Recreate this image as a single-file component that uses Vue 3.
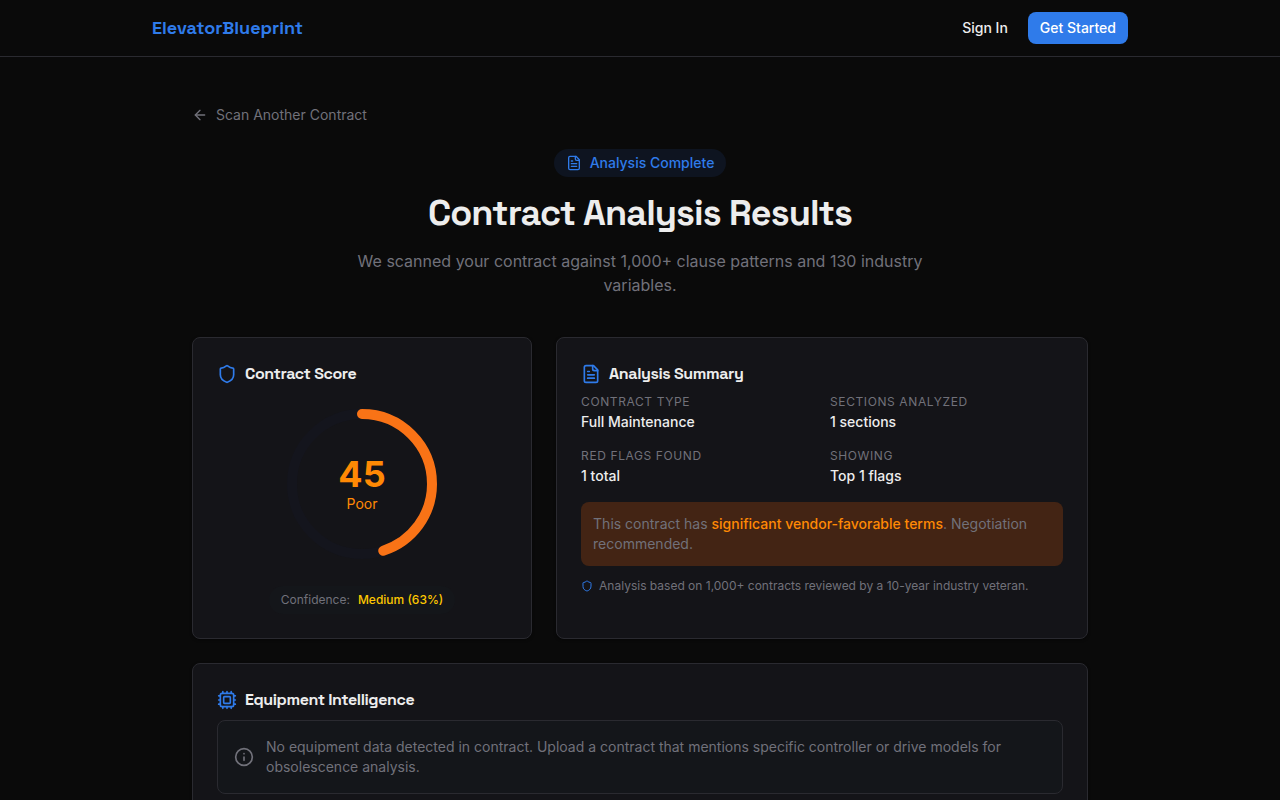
<script setup>
    import {ref, computed} from 'vue'

    const score = ref(45)
    const rating = ref('Poor')
    const confidence = ref('Medium (63%)')

    const summary = [
        {label: 'Contract Type', value: 'Full Maintenance'},
        {label: 'Sections Analyzed', value: '1 sections'},
        {label: 'Red Flags Found', value: '1 total'},
        {label: 'Showing', value: 'Top 1 flags'}
    ]

    // --- score ring ---
    const radius = 70
    const circumference = 2 * Math.PI * radius
    const ringOffset = computed(() => circumference * (1 - score.value / 100))
</script>

<template>
    <header class="topbar">
        <div class="topbar-inner">
            <a href="#" class="logo">ElevatorBlueprint</a>
            <nav class="actions">
                <a href="#" class="sign-in">Sign In</a>
                <button type="button" class="get-started">Get Started</button>
            </nav>
        </div>
    </header>

    <main class="page">
        <a href="#" class="back">
            <svg class="icon" width="16" height="16" viewBox="0 0 24 24">
                <path d="m12 19-7-7 7-7" />
                <path d="M19 12H5" />
            </svg>
            Scan Another Contract
        </a>

        <section class="intro">
            <div class="badge">
                <svg class="icon" width="16" height="16" viewBox="0 0 24 24">
                    <path d="M15 2H6a2 2 0 0 0-2 2v16a2 2 0 0 0 2 2h12a2 2 0 0 0 2-2V7Z" />
                    <path d="M14 2v4a2 2 0 0 0 2 2h4" />
                    <path d="M10 9H8M16 13H8M16 17H8" />
                </svg>
                Analysis Complete
            </div>
            <h1>Contract Analysis Results</h1>
            <p>We scanned your contract against 1,000+ clause patterns and 130 industry variables.</p>
        </section>

        <div class="columns">
            <section class="card score-card">
                <h2>
                    <svg class="icon" width="20" height="20" viewBox="0 0 24 24">
                        <path d="M20 13c0 5-3.5 7.5-7.66 8.95a1 1 0 0 1-.67-.01C7.5 20.5 4 18 4 13V6a1 1 0 0 1 1-1c2 0 4.500-1.200 6.240-2.720a1.170 1.170 0 0 1 1.520 0C14.510 3.810 17 5 19 5a1 1 0 0 1 1 1z" />
                    </svg>
                    Contract Score
                </h2>
                <div class="ring">
                    <svg width="160" height="160" viewBox="0 0 160 160">
                        <circle class="track" cx="80" cy="80" :r="radius" />
                        <circle class="value" cx="80" cy="80" :r="radius" transform="rotate(-90 80 80)"
                            :stroke-dasharray="circumference" :stroke-dashoffset="ringOffset" />
                    </svg>
                    <div class="ring-text">
                        <strong>{{ score }}</strong>
                        <span>{{ rating }}</span>
                    </div>
                </div>
                <div class="confidence">
                    <span>Confidence:</span>
                    <b>{{ confidence }}</b>
                </div>
            </section>

            <section class="card">
                <h2>
                    <svg class="icon" width="20" height="20" viewBox="0 0 24 24">
                        <path d="M15 2H6a2 2 0 0 0-2 2v16a2 2 0 0 0 2 2h12a2 2 0 0 0 2-2V7Z" />
                        <path d="M14 2v4a2 2 0 0 0 2 2h4" />
                        <path d="M10 9H8M16 13H8M16 17H8" />
                    </svg>
                    Analysis Summary
                </h2>
                <dl class="facts">
                    <div v-for="item in summary" :key="item.label">
                        <dt>{{ item.label }}</dt>
                        <dd>{{ item.value }}</dd>
                    </div>
                </dl>
                <p class="warning">This contract has <b>significant vendor-favorable terms</b>. Negotiation recommended.</p>
                <p class="footnote">
                    <svg class="icon" width="12" height="12" viewBox="0 0 24 24">
                        <path d="M20 13c0 5-3.5 7.5-7.66 8.95a1 1 0 0 1-.67-.01C7.5 20.5 4 18 4 13V6a1 1 0 0 1 1-1c2 0 4.500-1.200 6.240-2.720a1.170 1.170 0 0 1 1.520 0C14.510 3.810 17 5 19 5a1 1 0 0 1 1 1z" />
                    </svg>
                    Analysis based on 1,000+ contracts reviewed by a 10-year industry veteran.
                </p>
            </section>
        </div>

        <section class="card">
            <h2>
                <svg class="icon" width="20" height="20" viewBox="0 0 24 24">
                    <rect x="4" y="4" width="16" height="16" rx="2" />
                    <rect x="8" y="8" width="8" height="8" rx="1" />
                    <path d="M12 20v2M12 2v2M17 20v2M17 2v2M7 20v2M7 2v2" />
                    <path d="M2 12h2M2 17h2M2 7h2M20 12h2M20 17h2M20 7h2" />
                </svg>
                Equipment Intelligence
            </h2>
            <div class="empty">
                <svg class="icon" width="20" height="20" viewBox="0 0 24 24">
                    <circle cx="12" cy="12" r="10" />
                    <path d="M12 16v-4M12 8h.01" />
                </svg>
                <p>No equipment data detected in contract. Upload a contract that mentions specific controller or drive models for obsolescence analysis.</p>
            </div>
        </section>
    </main>
</template>

<style>
    body {
        background-color: #0a0a0a;
    }
</style>

<style scoped>
    .topbar, .page {
        font-family: Inter, "Liberation Sans", sans-serif;
        font-size: 14px;
        line-height: 20px;
        color: #ededed;
    }
    .topbar {
        border-bottom: 1px solid #2a2a30;
    }
    .topbar-inner {
        display: flex;
        align-items: center;
        justify-content: space-between;
        box-sizing: border-box;
        max-width: 1024px;
        height: 56px;
        margin: 0 auto;
        padding: 0 24px;
    }
    a {
        color: inherit;
        text-decoration: none;
    }
    h1, h2, p, dl, dd {
        margin: 0;
    }
    .icon {
        flex: none;
        fill: none;
        stroke: currentColor;
        stroke-width: 2;
        stroke-linecap: round;
        stroke-linejoin: round;
    }
    .logo, h1, h2 {
        font-family: "Space Grotesk", Inter, "Liberation Sans", sans-serif;
    }
    h1, h2 {
        letter-spacing: -0.025em;
    }
    .logo {
        color: #2f7bea;
        font-size: 18px;
        font-weight: 600;
    }
    .actions {
        display: flex;
        align-items: center;
        gap: 20px;
        font-weight: 500;
    }
    .get-started {
        height: 32px;
        padding: 0 12px;
        border: 0;
        border-radius: 8px;
        background-color: #2f7bea;
        color: #fff;
        font: inherit;
        cursor: pointer;
    }

    .page {
        box-sizing: border-box;
        max-width: 944px;
        margin: 0 auto;
        padding: 48px 24px;
    }
    .back {
        display: flex;
        align-items: center;
        gap: 8px;
        width: fit-content;
        color: #71717a;
    }
    .intro {
        display: flex;
        flex-direction: column;
        align-items: center;
        gap: 16px;
        margin: 24px 0 40px;
        text-align: center;
    }
    .badge {
        display: flex;
        align-items: center;
        gap: 8px;
        padding: 4px 12px;
        border-radius: 14px;
        background-color: #0e1420;
        color: #2f7bea;
        font-weight: 500;
    }
    h1 {
        font-size: 36px;
        font-weight: 700;
        line-height: 40px;
    }
    .intro p {
        max-width: 576px;
        color: #71717a;
        font-size: 16px;
        line-height: 24px;
    }

    .columns {
        display: grid;
        grid-template-columns: 39fr 61fr;
        gap: 24px;
        margin-bottom: 24px;
    }
    .card {
        padding: 24px;
        border: 1px solid #2a2a30;
        border-radius: 8px;
        background-color: #141418;
        box-shadow: 0 1px 3px rgba(0, 0, 0, 0.4);
    }
    h2 {
        display: flex;
        align-items: center;
        gap: 8px;
        margin-bottom: 8px;
        font-size: 16px;
        font-weight: 600;
        line-height: 24px;
    }
    h2 .icon {
        color: #2f7bea;
    }

    .score-card {
        display: flex;
        flex-direction: column;
    }
    .ring {
        position: relative;
        align-self: center;
        width: 160px;
        height: 160px;
        margin: 10px 0 22px;
    }
    .ring circle {
        fill: none;
        stroke-width: 10;
    }
    .track {
        stroke: #14151d;
    }
    .value {
        stroke: #f97316;
        stroke-linecap: round;
    }
    /* sits in the middle of the ring */
    .ring-text {
        position: absolute;
        inset: 0;
        display: flex;
        flex-direction: column;
        align-items: center;
        justify-content: center;
        color: #ff8904;
    }
    .ring-text strong {
        font-size: 36px;
        line-height: 40px;
    }
    .confidence {
        display: flex;
        align-self: center;
        gap: 8px;
        padding: 6px 12px;
        border-radius: 14px;
        background-color: #14161a;
        color: #71717a;
        font-size: 12px;
        line-height: 16px;
    }
    .confidence b {
        color: #fdc700;
        font-weight: 500;
    }

    .facts {
        display: grid;
        grid-template-columns: 1fr 1fr;
        gap: 16px;
    }
    dt {
        margin-bottom: 2px;
        color: #71717a;
        font-size: 12px;
        line-height: 16px;
        letter-spacing: 0.05em;
        text-transform: uppercase;
    }
    dd {
        font-weight: 500;
    }
    .warning {
        margin: 16px 0 12px;
        padding: 12px;
        border-radius: 8px;
        background-color: #432414;
        color: #71717a;
    }
    .warning b {
        color: #ff8904;
        font-weight: 500;
    }
    .footnote {
        display: flex;
        align-items: center;
        gap: 6px;
        color: #71717a;
        font-size: 12px;
        line-height: 16px;
    }
    .footnote .icon {
        color: #2f7bea;
    }

    .empty {
        display: flex;
        align-items: center;
        gap: 12px;
        padding: 16px;
        border: 1px solid #2a2a30;
        border-radius: 8px;
        background-color: #14161a;
        color: #71717a;
    }
</style>
